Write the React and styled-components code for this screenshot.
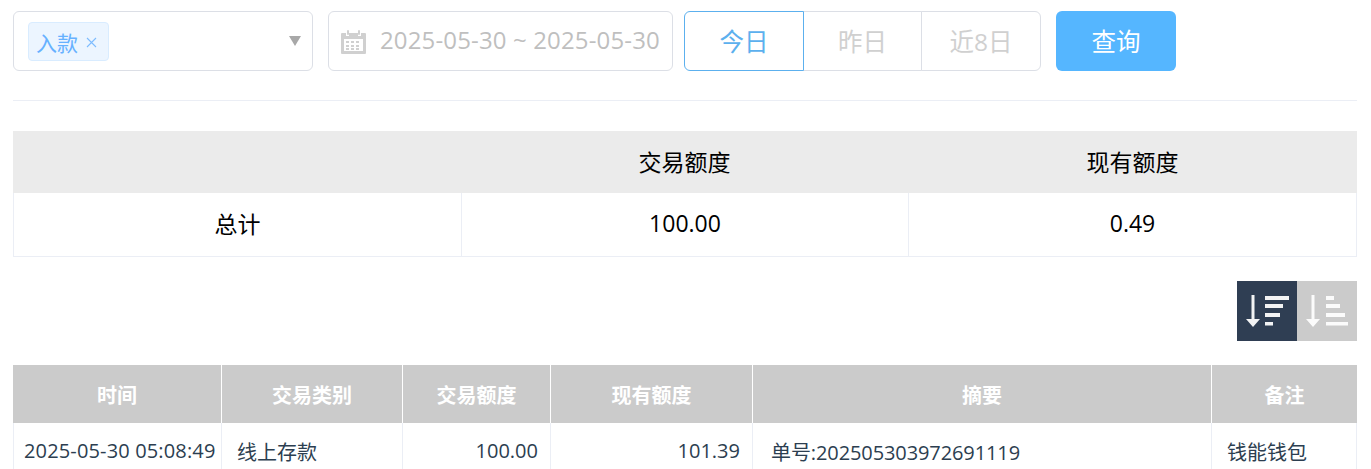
import React from 'react'
import styled, { createGlobalStyle } from 'styled-components'

const FONT = `"Open Sans", "Noto Sans CJK SC", sans-serif`

const GlobalStyle = createGlobalStyle`
  html, body { margin: 0; padding: 0; background: #fff; overflow: hidden; }
  body { font-family: ${FONT}; }
`

const Page = styled.div`
  width: 1344px;
  height: 469px;
  padding: 11px 14px 0 13px;
  overflow: hidden;
`

const FilterBar = styled.div`
  display: flex;
  height: 60px;
  padding-bottom: 29px;
  border-bottom: 1px solid #ebeef5;
  box-sizing: content-box;
`

const Field = styled.div`
  box-sizing: border-box;
  height: 60px;
  width: ${p => p.$width}px;
  margin-right: ${p => p.$gap}px;
  border: 1px solid #dcdfe6;
  border-radius: 6px;
  display: flex;
  align-items: center;
  position: relative;
`

const Tag = styled.span`
  box-sizing: border-box;
  margin-left: 14px;
  width: 81px;
  height: 39px;
  padding: 1px 0 0 7px;
  display: flex;
  align-items: center;
  gap: 8px;
  background: #ecf5ff;
  border: 1px solid #d9ecff;
  border-radius: 4px;
  color: #66b1ff;
  font-size: 21px;
`

const TagClose = styled.svg`
  width: 11px;
  height: 11px;
  margin-top: 1px;
  stroke: #7dbcff;
  stroke-width: 1.1;
`

const Caret = styled.i`
  position: absolute;
  right: 11px;
  top: 24px;
  width: 0;
  height: 0;
  border-left: 6px solid transparent;
  border-right: 6px solid transparent;
  border-top: 10px solid #a8a8a8;
`

const CalendarIcon = styled.svg`
  width: 25px;
  height: 25px;
  margin-left: 12px;
  flex: none;
  fill: #d0d0d0;
`

const DateText = styled.span`
  margin-left: 14px;
  padding-bottom: 3px;
  font-size: 24px;
  letter-spacing: 0.14px;
  color: #bfbfbf;
  white-space: nowrap;
`

const Segments = styled.div`
  display: flex;
  height: 60px;
  margin-right: 15px;
`

const Segment = styled.button`
  box-sizing: border-box;
  width: ${p => p.$width}px;
  height: 60px;
  padding: 0 0 2px;
  margin-left: ${p => (p.$first ? 0 : -1)}px;
  position: relative;
  z-index: ${p => (p.$active ? 1 : 0)};
  background: #fff;
  border: 1px solid ${p => (p.$active ? '#5cb0ee' : '#dcdfe6')};
  border-radius: ${p => p.$radius};
  color: ${p => (p.$active ? '#5cb0ee' : '#d0d0d0')};
  font-family: ${FONT};
  font-size: 24.500px;
`

const QueryButton = styled.button`
  width: 120px;
  height: 60px;
  padding: 0 0 2px;
  border: none;
  border-radius: 6px;
  background: #55b6ff;
  color: #fff;
  font-family: ${FONT};
  font-size: 24.500px;
`

const SummaryTable = styled.table`
  width: 1344px;
  margin-top: 30px;
  table-layout: fixed;
  border-collapse: separate;
  border-spacing: 0;
  color: #000;
  font-size: 23px;

  th {
    height: 62px;
    padding: 0 0 2px;
    box-sizing: border-box;
    background: #ebebeb;
    font-weight: 400;
    text-align: center;
  }
  td {
    height: 64px;
    padding: 0 0 3px;
    box-sizing: border-box;
    border-left: 1px solid #ebeef5;
    border-bottom: 1px solid #ebeef5;
    text-align: center;
  }
  td:last-child { border-right: 1px solid #ebeef5; }
`

const SortBar = styled.div`
  display: flex;
  justify-content: flex-end;
  margin-top: 24px;
`

const SortButton = styled.div`
  width: 60px;
  height: 60px;
  background: ${p => (p.$active ? '#2f3e53' : '#cbcbcb')};
  display: flex;
  align-items: center;
  justify-content: center;
`

const SortIcon = styled.svg`
  width: 60px;
  height: 60px;
  fill: #fff;
  opacity: 0.94;
`

const RecordTable = styled.table`
  width: 1344px;
  margin-top: 24px;
  table-layout: fixed;
  border-collapse: separate;
  border-spacing: 0;
  font-size: 20px;
  color: #2c3e50;

  th {
    height: 58px;
    padding: 0;
    box-sizing: border-box;
    background: #cbcbcb;
    color: #fff;
    font-size: 20px;
    font-weight: 700;
    text-align: center;
    border-left: 1px solid #fff;
  }
  th:first-child { border-left: none; }
  td {
    height: 58px;
    box-sizing: border-box;
    vertical-align: top;
    border-left: 1px solid #ebeef5;
    border-bottom: 1px solid #ebeef5;
    white-space: nowrap;
    overflow: hidden;
  }
  td:last-child { border-right: 1px solid #ebeef5; }
`

const Cell = styled.td`
  && {
    text-align: ${p => p.$align || 'left'};
    padding: 14px ${p => p.$right || 0}px 0 ${p => p.$left || 0}px;
    letter-spacing: ${p => p.$spacing || 0}px;
  }
`

const Col = styled.col`
  width: ${p => p.$width}px;
`

const summaryWidths = [448, 447, 449]

const columns = [
  { title: '时间', width: 208 },
  { title: '交易类别', width: 181 },
  { title: '交易额度', width: 148 },
  { title: '现有额度', width: 202 },
  { title: '摘要', width: 459 },
  { title: '备注', width: 146 },
]

const SortDesc = () => (
  <SortIcon viewBox="0 0 60 60">
    <rect x="14.500" y="14" width="3" height="25" />
    <path d="M9 38h14l-7 8z" />
    <rect x="28" y="15" width="24" height="4" />
    <rect x="28" y="23" width="18" height="4" />
    <rect x="28" y="32" width="15" height="4" />
    <rect x="28" y="41" width="8" height="3.500" />
  </SortIcon>
)

const SortAsc = () => (
  <SortIcon viewBox="0 0 60 60">
    <rect x="14.500" y="14" width="3" height="25" />
    <path d="M9 38h14l-7 8z" />
    <rect x="29" y="15" width="8" height="4" />
    <rect x="29" y="23" width="14" height="4" />
    <rect x="29" y="32" width="19" height="4" />
    <rect x="29" y="41" width="22" height="3.500" />
  </SortIcon>
)

const App = () => (
  <Page>
    <GlobalStyle />
    <FilterBar>
      <Field $width={300} $gap={15}>
        <Tag>
          入款
          <TagClose viewBox="0 0 11 11">
            <path d="M1 1l9 9M10 1l-9 9" />
          </TagClose>
        </Tag>
        <Caret />
      </Field>
      <Field $width={345} $gap={11}>
        <CalendarIcon viewBox="0 0 25 25">
          <path d="M1 4h4v3h3V4h9v3h3V4h4a1 1 0 0 1 1 1v19a1 1 0 0 1-1 1H1a1 1 0 0 1-1-1V5a1 1 0 0 1 1-1z M3 10v12h19V10z" fillRule="evenodd" />
          <rect x="6" y="1" width="2" height="5" rx="1" />
          <rect x="17" y="1" width="2" height="5" rx="1" />
          <path d="M5 12h3v2H5zM10 12h3v2h-3zM15 12h3v2h-3zM5 16h3v2H5zM10 16h3v2h-3zM15 16h3v2h-3zM5 19h3v2H5zM10 19h3v2h-3zM15 19h3v2h-3z" />
        </CalendarIcon>
        <DateText>2025-05-30 ~ 2025-05-30</DateText>
      </Field>
      <Segments>
        <Segment $first $active $width={120} $radius="6px 0 0 6px">今日</Segment>
        <Segment $width={119} $radius="0">昨日</Segment>
        <Segment $width={120} $radius="0 6px 6px 0">近8日</Segment>
      </Segments>
      <QueryButton>查询</QueryButton>
    </FilterBar>

    <SummaryTable>
      <colgroup>
        {summaryWidths.map((w, i) => <Col key={i} $width={w} />)}
      </colgroup>
      <thead>
        <tr>
          <th />
          <th>交易额度</th>
          <th>现有额度</th>
        </tr>
      </thead>
      <tbody>
        <tr>
          <td>总计</td>
          <td>100.00</td>
          <td>0.49</td>
        </tr>
      </tbody>
    </SummaryTable>

    <SortBar>
      <SortButton $active><SortDesc /></SortButton>
      <SortButton><SortAsc /></SortButton>
    </SortBar>

    <RecordTable>
      <colgroup>
        {columns.map(c => <Col key={c.title} $width={c.width} />)}
      </colgroup>
      <thead>
        <tr>
          {columns.map(c => <th key={c.title}>{c.title}</th>)}
        </tr>
      </thead>
      <tbody>
        <tr>
          <Cell $left={10} $spacing={0.15}>2025-05-30 05:08:49</Cell>
          <Cell $left={15}>线上存款</Cell>
          <Cell $align="right" $right={12}>100.00</Cell>
          <Cell $align="right" $right={12}>101.39</Cell>
          <Cell $left={18} $spacing={-0.1}>单号:202505303972691119</Cell>
          <Cell $left={15}>钱能钱包</Cell>
        </tr>
      </tbody>
    </RecordTable>
  </Page>
)

export default App
